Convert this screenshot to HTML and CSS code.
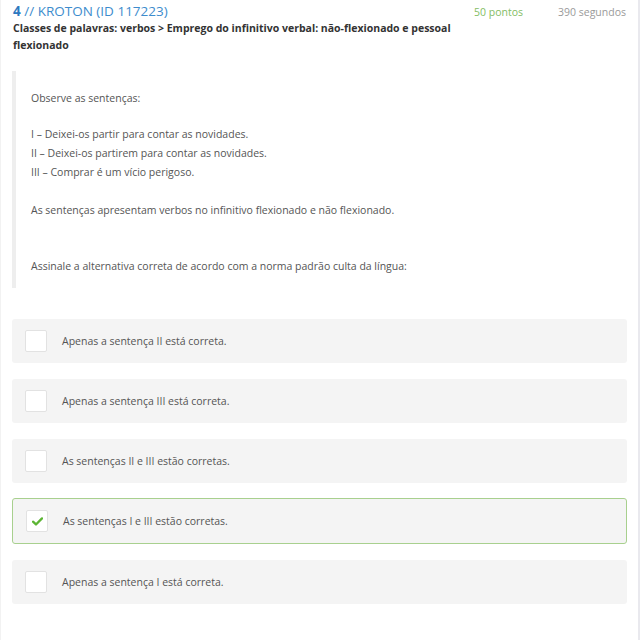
FILE: index.html
```html
<!DOCTYPE html>
<html lang="pt">
<head>
<meta charset="utf-8">
<title>Questão 4</title>
<link rel="stylesheet" href="styles.css">
</head>
<body>
<div class="page">
  <header class="head">
    <div class="head-main">
      <h1 class="title"><b>4</b> // KROTON (ID 117223)</h1>
      <div class="subject">Classes de palavras: verbos &gt; Emprego do infinitivo verbal: não-flexionado e pessoal flexionado</div>
    </div>
    <div class="meta">
      <span class="points">50 pontos</span>
      <span class="time">390 segundos</span>
    </div>
  </header>

  <blockquote class="statement">
    <p class="p1">Observe as sentenças:</p>
    <p class="p2">I – Deixei-os partir para contar as novidades.<br>II – Deixei-os partirem para contar as novidades.<br>III – Comprar é um vício perigoso.</p>
    <p class="p3">As sentenças apresentam verbos no infinitivo flexionado e não flexionado.</p>
    <p class="p4">Assinale a alternativa correta de acordo com a norma padrão culta da língua:</p>
  </blockquote>

  <ul class="options">
    <li class="option"><span class="box"></span><span class="label">Apenas a sentença II está correta.</span></li>
    <li class="option"><span class="box"></span><span class="label">Apenas a sentença III está correta.</span></li>
    <li class="option"><span class="box"></span><span class="label">As sentenças II e III estão corretas.</span></li>
    <li class="option checked"><span class="box"><svg class="tick" viewBox="0 0 12 10" width="11" height="9"><path d="M1 5.2 L4.3 8.3 L11 1.6" fill="none" stroke="#5cb534" stroke-width="2.6" stroke-linecap="round" stroke-linejoin="round"/></svg></span><span class="label">As sentenças I e III estão corretas.</span></li>
    <li class="option"><span class="box"></span><span class="label">Apenas a sentença I está correta.</span></li>
  </ul>
</div>
</body>
</html>
```

FILE: styles.css
```css
html, body {
  margin: 0;
  padding: 0;
  background: #fff;
}

body {
  font-family: "Open Sans", "Noto Sans", sans-serif;
  font-size: 10.5px;
  color: #555;
}

.page {
  box-sizing: border-box;
  width: 640px;
  min-height: 640px;
  border-left: 1px solid #f2f2f2;
  border-right: 2px solid #e9e9ee;
  padding: 2px 11px 0 11px;
}

.head {
  display: flex;
  align-items: flex-start;
  padding-left: 1px;
}

.head-main {
  flex: 1;
  max-width: 455px;
}

.title {
  margin: 0;
  font-size: 13.5px;
  font-weight: normal;
  line-height: 18px;
  color: #3d8ccd;
}

.title b {
  font-weight: bold;
  color: #2c79bf;
}

.subject {
  font-weight: bold;
  color: #333;
  line-height: 17px;
}

.meta {
  margin-left: auto;
  display: flex;
  gap: 35px;
  line-height: 18px;
  padding-top: 1px;
  padding-right: 1px;
}

.points {
  color: #83bd64;
}

.time {
  color: #9a9a9a;
}

.statement {
  margin: 17px 0 0 0;
  border-left: 4px solid #eeeeee;
  padding: 18px 0 12px 15px;
  line-height: 19px;
}

.statement p {
  margin: 0;
}

.statement .p2 {
  margin-top: 17px;
}

.statement .p3 {
  margin-top: 19px;
}

.statement .p4 {
  margin-top: 37px;
}

.options {
  list-style: none;
  margin: 31px 0 0 0;
  padding: 0;
  display: flex;
  flex-direction: column;
  gap: 16px;
}

.option {
  box-sizing: border-box;
  height: 44px;
  display: flex;
  align-items: center;
  background: #f4f4f4;
  border-radius: 3px;
  padding-left: 13px;
}

.option.checked {
  height: 46px;
  margin-top: -1px;
  border: 1px solid #a8d08e;
  padding-left: 13px;
}

.box {
  box-sizing: border-box;
  width: 22px;
  height: 22px;
  background: #fff;
  border: 1px solid #e2e2e2;
  border-radius: 2px;
  display: flex;
  align-items: center;
  justify-content: center;
  margin-right: 15px;
  flex: none;
}

.tick {
  display: block;
}

.label {
  color: #555;
}
```
